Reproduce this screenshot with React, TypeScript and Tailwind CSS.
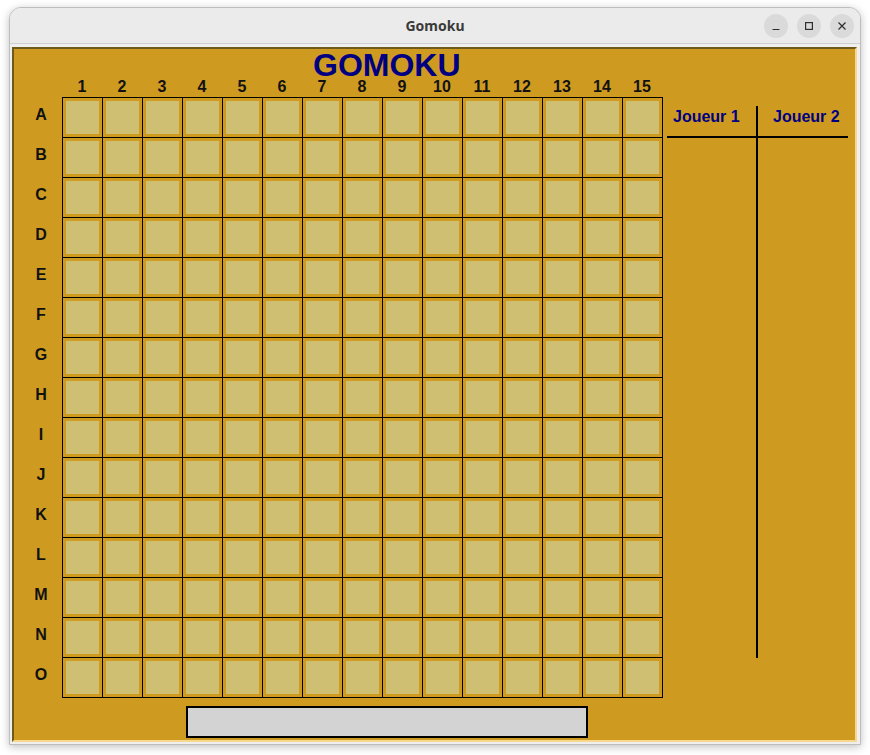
import React from 'react';

const cols = Array.from({ length: 15 }, (_, i) => i + 1);
const rows = 'ABCDEFGHIJKLMNO'.split('');

const TitleButton = ({ kind }: { kind: 'min' | 'max' | 'close' }) => (
  <div className="w-[24px] h-[24px] rounded-full bg-[#dadada] flex items-center justify-center">
    <svg width="16" height="16" viewBox="0 0 16 16" fill="none" stroke="#2e2e2e" strokeWidth="1.2">
      {kind === 'min' && <path d="M4.5 11.5h7" />}
      {kind === 'max' && <rect x="4.6" y="4.6" width="6.8" height="6.8" />}
      {kind === 'close' && <path d="M4.5 4.5l7 7M11.5 4.5l-7 7" />}
    </svg>
  </div>
);

export default function App() {
  return (
    <div className="w-[870px] h-[755px] bg-white overflow-hidden pt-[7px] pl-[9px]">
      {/* window */}
      <div className="w-[852px] h-[738px] border border-[#bdbdbd] rounded-t-[12px] shadow-[0_2px_8px_rgba(0,0,0,0.25)] bg-[#efefef] flex flex-col overflow-hidden">
        {/* title bar */}
        <div className="h-[36px] shrink-0 bg-[#ebebeb] border-b border-[#cfcfcf] relative flex items-center justify-end pr-[6px] gap-[9px]">
          <span className="absolute left-0 right-0 text-center text-[14px] font-bold text-[#3a3a3a] font-['Noto_Sans',sans-serif]">
            Gomoku
          </span>
          <TitleButton kind="min" />
          <TitleButton kind="max" />
          <TitleButton kind="close" />
        </div>

        {/* content */}
        <div className="flex-1 pt-[3px] pl-[2px]">
          <div className="w-[845px] h-[695px] bg-[#ce9b20] border-2 border-t-[#6f5a1c] border-l-[#6f5a1c] border-r-[#f8d88e] border-b-[#f8d88e] font-['Liberation_Sans',Arial,sans-serif] font-bold">
            {/* heading */}
            <div className="mt-[1px] h-[30px] leading-[30px] pl-[299px] text-[32px] text-[#000080]">GOMOKU</div>

            {/* column labels */}
            <div className="flex ml-[48px] h-[14px] leading-[14px] text-[16px] text-[#111]">
              {cols.map((c) => (
                <div key={c} className="w-[40px] text-center">
                  {c}
                </div>
              ))}
            </div>

            <div className="flex mt-[3px]">
              {/* row labels */}
              <div className="w-[48px] pt-[1px] pl-[6px] text-[16px] text-[#111]">
                {rows.map((r) => (
                  <div key={r} className="h-[40px] flex items-center justify-center pb-[6px]">
                    {r}
                  </div>
                ))}
              </div>

              {/* board */}
              <div className="border-l border-t border-black grid grid-cols-[repeat(15,40px)]">
                {rows.map((r) =>
                  cols.map((c) => (
                    <div key={r + c} className="w-[40px] h-[40px] border-r border-b border-black p-[3px]">
                      <div className="w-full h-full bg-[#cfbf72]" />
                    </div>
                  ))
                )}
              </div>

              {/* score table */}
              <div className="ml-[4px] mt-[9px] w-[181px] h-[552px] flex text-[16px] text-[#000080]">
                <div className="w-[89px]">
                  <div className="h-[32px] border-b-2 border-black pt-[3px] pl-[6px] leading-[16px]">Joueur 1</div>
                </div>
                <div className="w-[2px] h-full bg-black" />
                <div className="w-[90px]">
                  <div className="h-[32px] border-b-2 border-black pt-[3px] pl-[15px] leading-[16px]">Joueur 2</div>
                </div>
              </div>
            </div>

            {/* input */}
            <div className="mt-[8px] ml-[172px] w-[402px] h-[32px] border-2 border-black bg-[#d3d3d3]" />
          </div>
        </div>
      </div>
    </div>
  );
}
